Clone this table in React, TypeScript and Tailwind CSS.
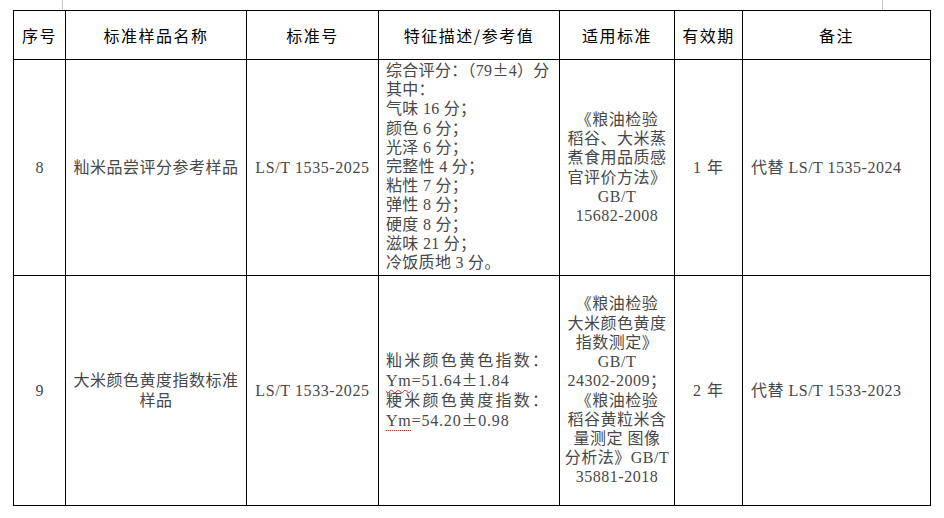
import React from "react";

const BODY = "font-['Liberation_Serif','Noto_Sans_CJK_SC',serif]";
const HEAD = "font-['Noto_Sans_CJK_SC','Liberation_Sans',sans-serif]";

const Pm = () => <span className="font-['Noto_Sans_CJK_SC',sans-serif]">±</span>;

function Spread({ text }: { text: string }) {
  return (
    <div className="flex justify-between">
      {text.split("").map((c, i) => (
        <span key={i}>{c}</span>
      ))}
    </div>
  );
}

function Ym({ wavy }: { wavy?: boolean }) {
  return (
    <span
      className={
        wavy
          ? "underline decoration-wavy decoration-[#e02020] decoration-1 underline-offset-[3px]"
          : "underline decoration-dotted decoration-[#e02020] decoration-1 underline-offset-[4px]"
      }
    >
      Ym
    </span>
  );
}

const HEADERS = ["序号", "标准样品名称", "标准号", "特征描述/参考值", "适用标准", "有效期", "备注"];
const WIDTHS = ["w-[52px]", "w-[181px]", "w-[132px]", "w-[181px]", "w-[115px]", "w-[68px]", "w-[188px]"];

const SCORES = [
  <>综合评分：（79<Pm />4）分</>,
  <>其中：</>,
  <>气味 16 分；</>,
  <>颜色 6 分；</>,
  <>光泽 6 分；</>,
  <>完整性 4 分；</>,
  <>粘性 7 分；</>,
  <>弹性 8 分；</>,
  <>硬度 8 分；</>,
  <>滋味 21 分；</>,
  <>冷饭质地 3 分。</>,
];

const STD8 = ["《粮油检验", "稻谷、大米蒸", "煮食用品质感", "官评价方法》", "GB/T", "15682-2008"];
const STD9 = [
  "《粮油检验",
  "大米颜色黄度",
  "指数测定》",
  "GB/T",
  "24302-2009；",
  "《粮油检验",
  "稻谷黄粒米含",
  "量测定 图像",
  "分析法》GB/T",
  "35881-2018",
];

export default function App() {
  const td = `border border-black align-middle text-[16px] leading-[19.2px] text-[#484848] ${BODY}`;
  return (
    <div className="w-[944px] h-[518px] bg-white overflow-hidden">
      <div className="flex h-[10px]">
        <div className="ml-[62px] w-px bg-[#c8c8c8]" />
        <div className="ml-[819px] w-px bg-[#c8c8c8]" />
      </div>
      <table className="ml-[13px] w-[918px] table-fixed border-collapse">
        <colgroup>
          {WIDTHS.map((w, i) => (
            <col key={i} className={w} />
          ))}
        </colgroup>
        <thead>
          <tr className="h-[49px]">
            {HEADERS.map((h) => (
              <th
                key={h}
                className={`border border-black text-center align-middle text-[16px] font-normal tracking-[1.5px] text-black ${HEAD}`}
              >
                {h}
              </th>
            ))}
          </tr>
        </thead>
        <tbody>
          <tr className="h-[216px]">
            <td className={`${td} text-center`}>8</td>
            <td className={`${td} px-1 text-center tracking-[0.5px] whitespace-nowrap`}>籼米品尝评分参考样品</td>
            <td className={`${td} text-center tracking-[0.6px] whitespace-nowrap`}>LS/T 1535-2025</td>
            <td className={`${td} !align-top pl-[7px] pr-0 whitespace-nowrap`}>
              {SCORES.map((s, i) => (
                <div key={i} className="tracking-[0.3px]">
                  {s}
                </div>
              ))}
            </td>
            <td className={`${td} text-center whitespace-nowrap tracking-[0.5px]`}>
              {STD8.map((s) => (
                <div key={s}>{s}</div>
              ))}
            </td>
            <td className={`${td} text-center tracking-[1px]`}>1 年</td>
            <td className={`${td} pl-[8px] tracking-[0.5px] whitespace-nowrap`}>代替 LS/T 1535-2024</td>
          </tr>
          <tr className="h-[230px]">
            <td className={`${td} text-center`}>9</td>
            <td className={`${td} px-1 text-center tracking-[0.5px]`}>
              <div className="whitespace-nowrap">大米颜色黄度指数标准</div>
              <div>样品</div>
            </td>
            <td className={`${td} text-center tracking-[0.6px] whitespace-nowrap`}>LS/T 1533-2025</td>
            <td className={`${td} pl-[7px] pr-[11px] whitespace-nowrap`}>
              <Spread text="籼米颜色黄色指数：" />
              <div className="tracking-[0.8px]">
                <Ym wavy />=51.64<Pm />1.84
              </div>
              <Spread text="粳米颜色黄度指数：" />
              <div className="tracking-[0.8px]">
                <Ym />=54.20<Pm />0.98
              </div>
            </td>
            <td className={`${td} text-center whitespace-nowrap tracking-[0.5px]`}>
              {STD9.map((s, i) => (
                <div key={i}>{s}</div>
              ))}
            </td>
            <td className={`${td} text-center tracking-[1px]`}>2 年</td>
            <td className={`${td} pl-[8px] tracking-[0.5px] whitespace-nowrap`}>代替 LS/T 1533-2023</td>
          </tr>
        </tbody>
      </table>
    </div>
  );
}
